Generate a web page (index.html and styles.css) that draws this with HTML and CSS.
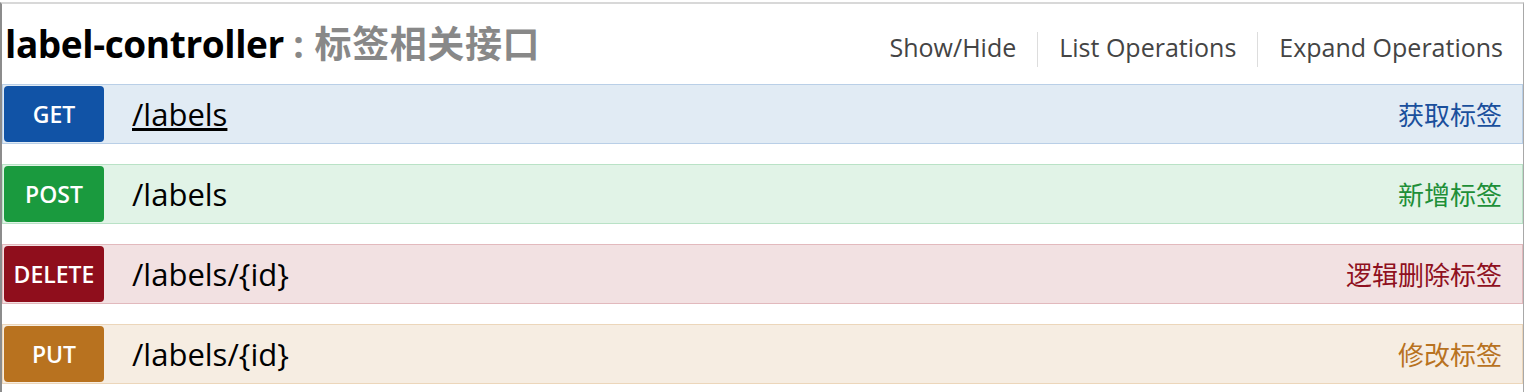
FILE: index.html
```html
<!DOCTYPE html>
<html>
<head>
  <meta charset="UTF-8" />
  <title>label-controller</title>
  <link rel="stylesheet" href="styles.css">
</head>
<body>
  <div class="resource">
    <div class="heading">
      <h2 class="title">label-controller <span class="desc">: 标签相关接口</span></h2>
      <ul class="options">
        <li><a href="#">Show/Hide</a></li>
        <li><a href="#">List Operations</a></li>
        <li><a href="#">Expand Operations</a></li>
      </ul>
    </div>

    <ul class="endpoints">
      <li class="op get">
        <span class="method">GET</span>
        <a class="path underline" href="#">/labels</a>
        <span class="summary">获取标签</span>
      </li>
      <li class="op post">
        <span class="method">POST</span>
        <a class="path" href="#">/labels</a>
        <span class="summary">新增标签</span>
      </li>
      <li class="op delete">
        <span class="method">DELETE</span>
        <a class="path" href="#">/labels/{id}</a>
        <span class="summary">逻辑删除标签</span>
      </li>
      <li class="op put">
        <span class="method">PUT</span>
        <a class="path" href="#">/labels/{id}</a>
        <span class="summary">修改标签</span>
      </li>
    </ul>
  </div>
</body>
</html>
```

FILE: styles.css
```css
body {
  margin: 0;
  background: #fff;
  font-family: 'Open Sans', 'Noto Sans CJK SC', sans-serif;
}

.resource {
  width: 1521px;
  min-height: 390px;
  margin-top: 2px;
  border-top: 2px solid #d8d8d8;
  border-left: 2px solid #8c8c8c;
  border-right: 1px solid #a8a8a8;
}

.heading {
  display: flex;
  justify-content: space-between;
  align-items: center;
  height: 80px;
}

.title {
  margin: 0 0 4px 3px;
  font-size: 37px;
  font-weight: bold;
  color: #000;
  letter-spacing: -0.4px;
}

.title .desc {
  color: #888;
  letter-spacing: 0.6px;
}

.options {
  display: flex;
  list-style: none;
  margin: 10px 0 0;
  padding: 0;
}

.options li {
  padding: 0 21px;
  border-left: 1px solid #ddd;
  line-height: 31px;
}

.options li:first-child {
  border-left: none;
}

.options li:last-child {
  padding-right: 20px;
}

.options a {
  color: #444;
  font-size: 25px;
  text-decoration: none;
}

.endpoints {
  list-style: none;
  margin: 0;
  padding: 0;
  display: flex;
  flex-direction: column;
  gap: 20px;
}

.op {
  display: flex;
  align-items: center;
  padding: 1px;
  border: 1px solid;
}

.method {
  width: 100px;
  height: 56px;
  display: flex;
  align-items: center;
  justify-content: center;
  border-radius: 4px;
  color: #fff;
  font-size: 23px;
  font-weight: 600;
}

.path {
  margin-left: 28px;
  font-size: 31px;
  color: #000;
  text-decoration: none;
}

.path.underline {
  text-decoration: underline;
}

.summary {
  margin-left: auto;
  padding-right: 19px;
  font-size: 26px;
}

.get { background: #e1ebf4; border-color: #b9cfe7; }
.get .method { background: #1153a6; }
.get .summary { color: #1a4f9c; }

.post { background: #e1f3e7; border-color: #b9e2c6; }
.post .method { background: #1a9a3e; }
.post .summary { color: #1e8f38; }

.delete { background: #f2e1e2; border-color: #e2b9bd; }
.delete .method { background: #8f0e1c; }
.delete .summary { color: #8f1020; }

.put { background: #f6ede2; border-color: #ecd6ba; }
.put .method { background: #b8721f; }
.put .summary { color: #b8721f; }
```
